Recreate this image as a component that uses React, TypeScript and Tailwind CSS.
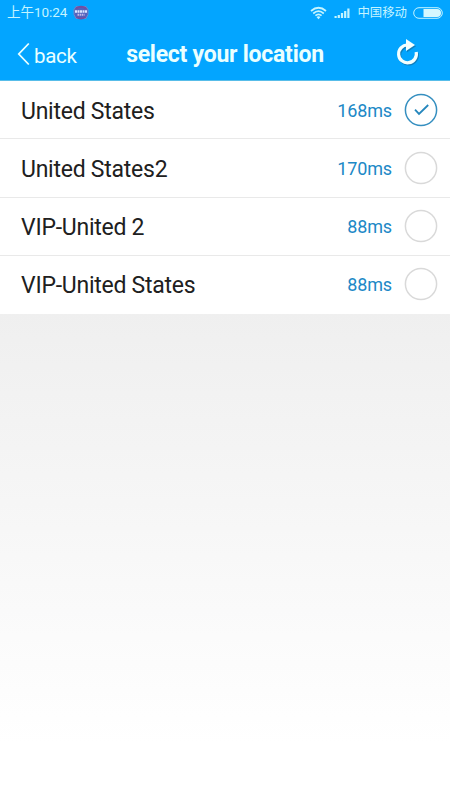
const servers = [
  { name: "United States", ping: "168ms", selected: true },
  { name: "United States2", ping: "170ms", selected: false },
  { name: "VIP-United 2", ping: "88ms", selected: false },
  { name: "VIP-United States", ping: "88ms", selected: false },
];

function StatusBar() {
  return (
    <div className="flex h-[25px] items-center pl-[7px] pr-[6px] text-[13.5px] leading-[25px] text-[#c5f4ff]">
      <span className="whitespace-nowrap font-[Roboto,'Noto_Sans_CJK_SC',sans-serif] tracking-[-0.05px]">上午10:24</span>
      <svg className="ml-[6px]" width="16" height="16" viewBox="0 0 16 16">
        <path d="M3 1.5h10l2 3v5l-2 4H3l-2-4v-5z" fill="#5264bd" stroke="#7186cb" strokeWidth="1" />
        <path d="M3 4c2-3 8-3 10 0M4 12c2 2 6 2 8 0" fill="none" stroke="#7150a2" strokeWidth="2" />
        <path d="M2 6.5h12" stroke="#dce6ff" strokeWidth="2.5" strokeDasharray="2 .5" />
        <path d="M4.5 9.7h7" stroke="#c9b9e8" strokeWidth="2" strokeDasharray="1.5 .6" />
      </svg>
      <svg className="ml-auto" width="17" height="14" viewBox="0 0 17 14" fill="none" stroke="currentColor" strokeWidth="1.7">
        <path d="M1 5Q8.5-1.5 16 5" />
        <path d="M3.2 7.5Q8.5 2.9 13.8 7.5" />
        <path d="M5.4 9.7Q8.5 7 11.6 9.7" />
        <path d="M6.5 11Q8.5 9.3 10.5 11L8.5 13.3z" fill="currentColor" stroke="none" />
      </svg>
      <svg className="ml-[7px]" width="16" height="12" viewBox="0 0 16 12" fill="currentColor">
        <path d="M.5 9h2.2v2H.5zM3.7 8h2.2v3H3.7zM6.9 6h2.2v5H6.9zM10.1 4h2.2v7h-2.2zM13.3 1.5h2.2V11h-2.2z" />
      </svg>
      <span className="ml-[7px] whitespace-nowrap font-['Noto_Sans_CJK_SC',sans-serif] text-[12.4px]">中国移动</span>
      <svg className="ml-[6px]" width="31" height="12" viewBox="0 0 31 12">
        <rect x=".7" y=".7" width="28.6" height="10.6" rx="5.3" fill="none" stroke="#c5f4ff" />
        <path d="M10.5 2H24a4 4 0 0 1 0 8H10.5z" fill="#d5f8ff" />
      </svg>
    </div>
  );
}

function NavBar() {
  return (
    <div className="grid h-[55px] grid-cols-[100px_1fr_100px] items-center text-[#eaffff]">
      <button className="flex items-center pl-[17px] pt-[3px]">
        <svg width="13" height="24" viewBox="0 0 13 24" fill="none" stroke="currentColor" strokeWidth="1.8">
          <path d="M11.8 1.5L1.8 12l10 10.5" />
        </svg>
        <span className="ml-[4px] pt-[3px] text-[20.5px] leading-6 tracking-[-0.3px]">back</span>
      </button>
      <h1 className="whitespace-nowrap pt-[4px] text-center text-[23px] font-bold leading-7 tracking-[-0.25px]">select your location</h1>
      <button className="flex justify-center pl-[16px]">
        <svg width="26" height="30" viewBox="0 0 26 30">
          <g transform="translate(1 1.2)" fill="none" stroke="#176c9d" opacity=".65">
            <path d="M12.5 7A8.9 8.9 0 1 0 21.2 14" strokeWidth="3.2" />
            <path d="M11 1l9 6-9 6z" fill="#176c9d" stroke="none" />
          </g>
          <path d="M12.5 7A8.9 8.9 0 1 0 21.2 14" fill="none" stroke="#f3ffff" strokeWidth="3.2" />
          <path d="M11 1l9 6-9 6z" fill="#f3ffff" />
        </svg>
      </button>
    </div>
  );
}

function Radio({ selected }: { selected: boolean }) {
  return (
    <svg className="ml-3" width="34" height="34" viewBox="0 0 34 34" fill="none">
      <circle cx="17" cy="17" r="15.6" stroke={selected ? "#358fc0" : "#d9d9d9"} strokeWidth="1.5" />
      {selected && <path d="M11 16.6l4 4.3 9.2-8.9" stroke="#2587bd" strokeWidth="1.8" />}
    </svg>
  );
}

export default function App() {
  return (
    <main className="flex h-[800px] w-[450px] flex-col overflow-hidden bg-linear-to-b from-[#efefef] from-[39%] to-white to-[93%] font-[Roboto,sans-serif]">
      <header className="h-[81px] shrink-0 border-b border-[#58bde9] bg-[#03a5ff]">
        <StatusBar />
        <NavBar />
      </header>
      <div className="grid h-[233px] shrink-0 grid-rows-4 bg-white">
        {servers.map((server) => (
          <div key={server.name} className="flex items-center border-b border-[#e9e9e9] pl-[21px] pr-3 last:border-transparent">
            <span className="pt-[4px] text-[23px] leading-7 tracking-[-0.25px] text-[#202020]">{server.name}</span>
            <span className="ml-auto pt-[2px] text-[18px] leading-6 tracking-[-0.15px] text-[#2088c6]">{server.ping}</span>
            <Radio selected={server.selected} />
          </div>
        ))}
      </div>
    </main>
  );
}
